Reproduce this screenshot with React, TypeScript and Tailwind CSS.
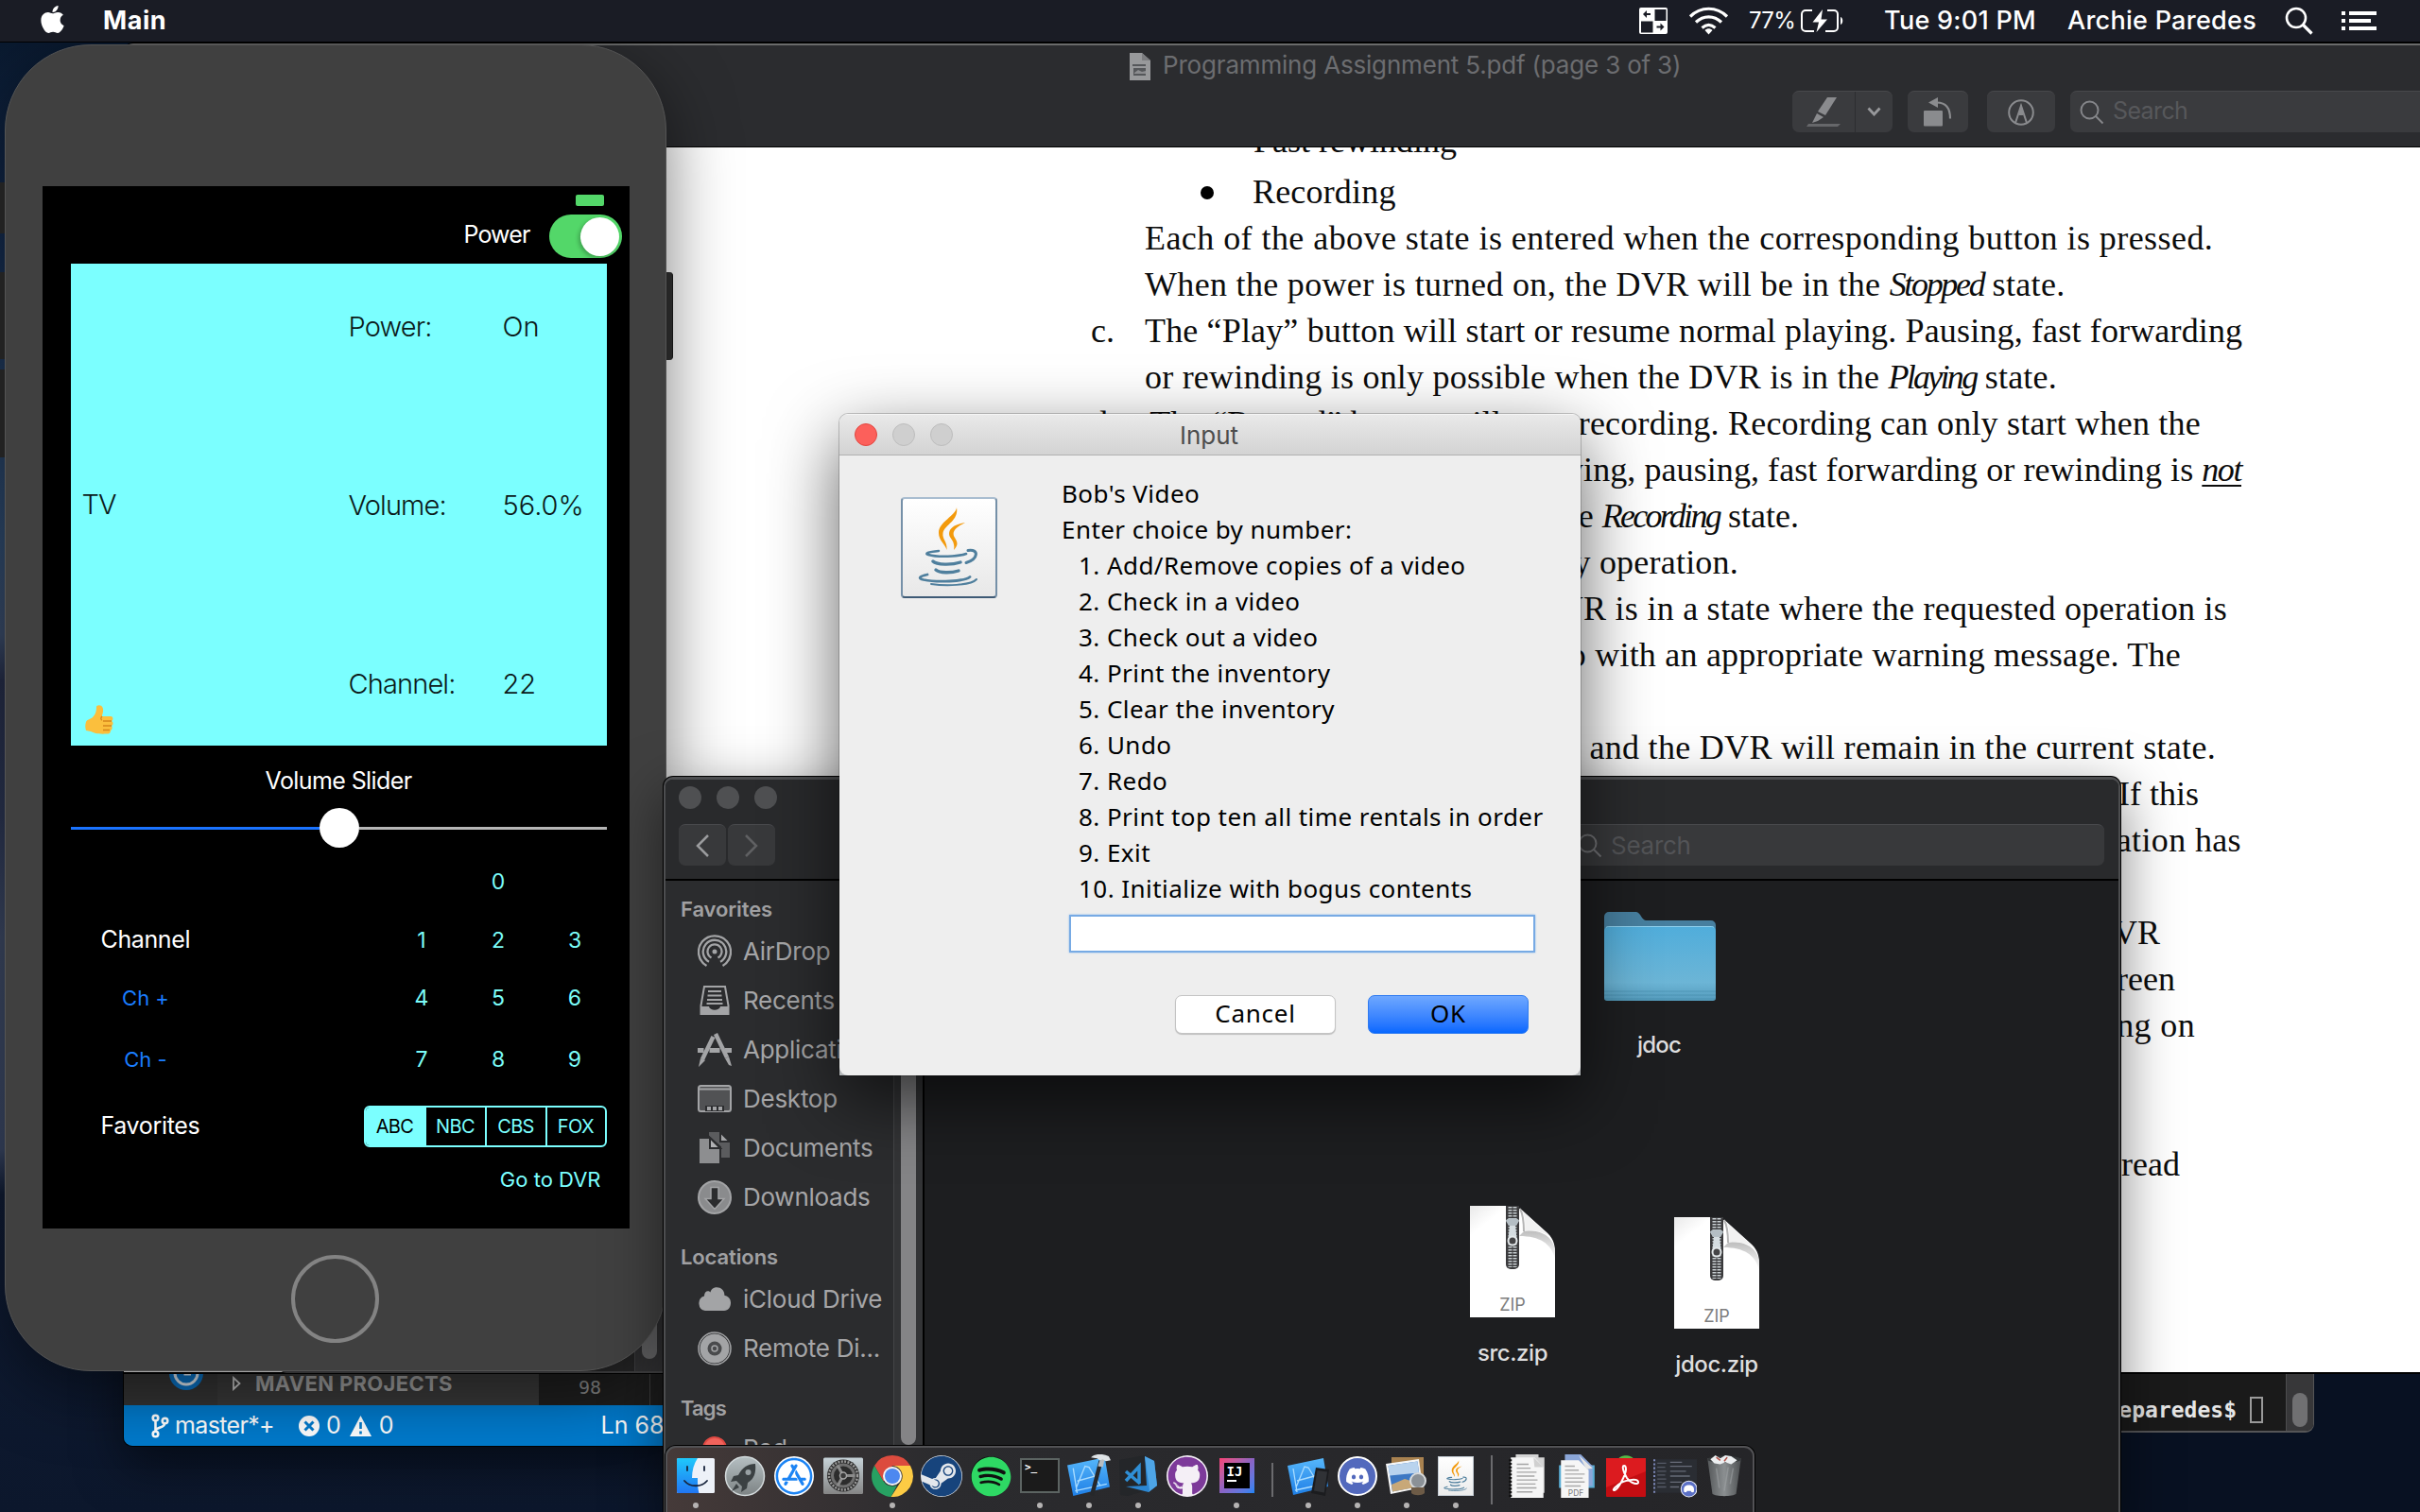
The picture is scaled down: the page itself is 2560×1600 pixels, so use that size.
import React from "react";
import { FaApple, FaSpotify, FaGithub, FaDiscord, FaSteam, FaAppStore } from "react-icons/fa";

/* ---------- menu bar ---------- */

function MenuBar() {
  return (
    <header className="absolute inset-x-0 top-0 z-50 flex h-[45px] items-center border-b border-black bg-[#1a1c25] font-['Inter',sans-serif] text-white">
      <FaApple className="ml-[39px] -mt-[4px] size-[33px]" />
      <span className="ml-[37px] -mt-[1px] text-[27px] leading-[40px] font-bold tracking-[0.02em]">Main</span>
      <svg className="ml-auto h-[28px] w-[30px]" viewBox="0 0 30 28">
        <rect width="30" height="28" rx="2" fill="#fff" />
        <rect x="16.5" y="2" width="12" height="12" fill="#1a1c25" />
        <rect x="2" y="14.5" width="12.5" height="12" fill="#1a1c25" />
        <path d="M4 7l4-4v3h4v2H8v3zM26.500 20.500l-4-4v3h-4v2h4v3z" fill="#1a1c25" />
      </svg>
      <svg className="ml-[22px] h-[30px] w-[43px]" viewBox="0 0 43 30" fill="none" stroke="#fff" strokeWidth="3.2">
        <path d="M2 10.500C13 -.5 30 -.5 41 10.500M8 16.500c8-7.500 19-7.500 27 0M14.500 22.500c4.500-4 9.500-4 14 0" />
        <path d="M21.500 29.500l-4-4.500c2.500-2.200 5.500-2.200 8 0z" fill="#fff" stroke="none" />
      </svg>
      <span className="ml-[21px] w-[48px] whitespace-nowrap text-[24px] leading-[40px] tracking-[-0.03em]">77%</span>
      <svg className="ml-[7px] h-[26px] w-[46px]" viewBox="0 0 46 26" fill="none" stroke="#fff" strokeWidth="2">
        <path d="M12 2H5a4 4 0 0 0-4 4v14a4 4 0 0 0 4 4h9M28 2h7a4 4 0 0 1 4 4v14a4 4 0 0 1-4 4h-9" />
        <path d="M23 1L12.500 14.500h6.500L16.500 25 28 11.500h-6.500z" fill="#fff" stroke="none" />
        <path d="M42 9c3 1 3 7 0 8z" fill="#fff" stroke="none" />
      </svg>
      <span className="ml-[42px] w-[160px] whitespace-nowrap text-[27px] leading-[40px] font-medium tracking-[0.01em]">Tue 9:01 PM</span>
      <span className="ml-[34px] w-[200px] whitespace-nowrap text-[27px] leading-[40px] font-medium tracking-[0.01em]">Archie Paredes</span>
      <svg className="ml-[30px] h-[30px] w-[30px]" viewBox="0 0 30 30" fill="none" stroke="#fff" strokeWidth="2.600">
        <circle cx="12" cy="12" r="10" />
        <path d="M19 19l9.500 9.500" strokeWidth="3.200" />
      </svg>
      <svg className="mr-[46px] ml-[30px] h-[22px] w-[37px]" viewBox="0 0 37 22" fill="#fff">
        <path d="M0 1h4v4H0zM0 9h4v4H0zM0 17h4v4H0zM8 1h29v4H8zM8 9h23v4H8zM8 17h29v4H8z" />
      </svg>
    </header>
  );
}

/* ---------- PDF document window ---------- */

type Line = { mark?: string; text: React.ReactNode; cls: string };

const lines: Line[] = [
  { text: "Each of the above state is entered when the corresponding button is pressed.", cls: "tracking-[0.0123em]" },
  { text: <>When the power is turned on, the DVR will be in the <i className="tracking-[-0.065em]">Stopped</i> state.</>, cls: "tracking-[0.009em]" },
  { mark: "c.", text: "The “Play” button will start or resume normal playing. Pausing, fast forwarding", cls: "tracking-[0.0044em]" },
  { text: <>or rewinding is only possible when the DVR is in the <i className="tracking-[-0.075em]">Playing</i> state.</>, cls: "tracking-[0.006em]" },
  { mark: "d.", text: "The “Record” button will start recording. Recording can only start when the", cls: "w-[1117px] text-right tracking-[0.006em]" },
  { text: <>playing, pausing, fast forwarding or rewinding is <i className="underline decoration-2 underline-offset-4 tracking-[-0.04em]">not</i></>, cls: "w-[1160px] text-right tracking-[0.002em]" },
  { text: <>the <i className="tracking-[-0.075em]">Recording</i> state.</>, cls: "w-[692px] text-right" },
  { text: "any operation.", cls: "w-[628px] text-right tracking-[0.006em]" },
  { text: "DVR is in a state where the requested operation is", cls: "w-[1145px] text-right tracking-[0.007em]" },
  { text: "up with an appropriate warning message. The", cls: "w-[1096px] text-right tracking-[0.006em]" },
  { text: "", cls: "" },
  { text: ", and the DVR will remain in the current state.", cls: "w-[1133px] text-right tracking-[0.0085em]" },
  { text: "If this", cls: "w-[1115px] text-right" },
  { text: "operation has", cls: "w-[1160px] text-right tracking-[0.01em]" },
  { text: "", cls: "" },
  { text: "DVR", cls: "w-[1074px] text-right" },
  { text: "screen", cls: "w-[1090px] text-right" },
  { text: "being on", cls: "w-[1111px] text-right tracking-[0.01em]" },
  { text: "", cls: "" },
  { text: "", cls: "" },
  { text: "read", cls: "w-[1095px] text-right" },
];

function PdfWindow() {
  return (
    <section className="absolute top-[46px] right-0 left-[131px] flex h-[1407px] flex-col overflow-hidden rounded-tl-[10px] border-b border-black bg-[#2b2c2f] shadow-[0_0_0_1px_#000]">
      <div className="h-[110px] border-t-2 border-b border-t-[#6a6b6b] border-b-black font-['Inter',sans-serif]">
        <div className="flex h-[44px] items-center pl-[1064px]">
          <svg className="h-[29px] w-[22px]" viewBox="0 0 22 29">
            <path d="M0 0h13l9 8v21H0z" fill="#98999b" />
            <path d="M13 0v8h9z" fill="#7c7d80" />
            <path d="M3 12h14v2H3zM4 16h13v8H4z" fill="#55575a" />
            <path d="M5 21l4-3 4 2 4-1v3H5z" fill="#8b8c8f" />
          </svg>
          <span className="ml-[13px] -mt-[2px] text-[26px] leading-[44px] tracking-[-0.007em] whitespace-nowrap text-[#6c6d70]">
            Programming Assignment 5.pdf (page 3 of 3)
          </span>
        </div>
        <div className="mt-[4px] flex h-[44px] pl-[1765px]">
          <div className="flex h-full w-[106px] rounded-[7px] border-t border-[#48494c] bg-[#3a3b3e]">
            <div className="flex w-[67px] items-center justify-center border-r border-[#2d2e31]">
              <svg className="h-[32px] w-[36px]" viewBox="0 0 36 32">
                <path d="M22 0h10L20 19l-8-4z" fill="#8a8b8e" />
                <path d="M11 17l7 4-6 4-6 2z" fill="#8a8b8e" />
                <path d="M2 28h34l-3 3H0z" fill="#66676a" />
              </svg>
            </div>
            <div className="flex flex-1 items-center justify-center pb-[2px]">
              <svg className="h-[10px] w-[15px]" viewBox="0 0 15 10" fill="none" stroke="#97989b" strokeWidth="2.800">
                <path d="M1.500 1.500l6 6.500 6-6.500" />
              </svg>
            </div>
          </div>
          <div className="ml-[16px] flex h-full w-[64px] items-center justify-center rounded-[7px] border-t border-[#48494c] bg-[#3a3b3e]">
            <svg className="h-[31px] w-[30px]" viewBox="0 0 30 31">
              <rect x="0" y="14" width="20" height="16.500" rx="1" fill="#8a8b8e" />
              <path d="M5 5.500L15 0v11z" fill="#8a8b8e" />
              <path d="M14 5.500c9 0 14 5 14 17" fill="none" stroke="#8a8b8e" strokeWidth="2.200" />
            </svg>
          </div>
          <div className="ml-[20px] flex h-full w-[72px] items-center justify-center rounded-[7px] border-t border-[#48494c] bg-[#3a3b3e]">
            <svg className="size-[28px]" viewBox="0 0 28 28" fill="none" stroke="#8a8b8e" strokeWidth="2">
              <circle cx="14" cy="14" r="12.800" />
              <path d="M8 25l6-18 6 18" />
              <path d="M12 12l2-7 2 7v5h-4z" fill="#8a8b8e" stroke="none" />
            </svg>
          </div>
          <div className="ml-[16px] flex h-full flex-1 items-center rounded-l-[7px] border-t border-[#48494c] bg-[#3a3b3e]">
            <svg className="ml-[10px] size-[26px]" viewBox="0 0 26 26" fill="none" stroke="#85868a" strokeWidth="2">
              <circle cx="10.500" cy="10.500" r="9" />
              <path d="M17 17l7.500 7.500" />
            </svg>
            <span className="-mt-[3px] ml-[9px] text-[25px] leading-[40px] tracking-[-0.025em] text-[#57585b]">Search</span>
          </div>
        </div>
      </div>
      <article className="flex-1 overflow-hidden bg-white font-['Liberation_Serif',serif] text-[36px] leading-[49px] whitespace-nowrap text-[#0c0c0c]">
        <div className="-mt-[31px] ml-[1195px] h-[54px]">Fast rewinding</div>
        <div className="ml-[1139px] flex h-[49px] items-center">
          <span className="size-[14px] rounded-full bg-black" />
          <span className="ml-[41px] tracking-[0.005em]">Recording</span>
        </div>
        {lines.map((l, i) => (
          <div key={i} className="ml-[1023px] grid h-[49px] grid-cols-[57px_1fr]">
            <span>{l.mark}</span>
            <div>
              <div className={l.cls}>{l.text}</div>
            </div>
          </div>
        ))}
      </article>
    </section>
  );
}

/* ---------- editor, terminal and a console window peeking out ---------- */

function EditorWindow() {
  return (
    <section className="absolute top-[1380px] left-[131px] flex h-[150px] w-[640px] flex-col overflow-hidden rounded-b-[9px] bg-[#1e1e1e] font-['Inter',sans-serif] shadow-[0_0_0_1px_#000,0_20px_50px_rgba(0,0,0,0.5)]">
      <div className="flex flex-1 items-end">
        <div className="flex h-full w-[99px] items-end justify-center bg-[#333333]">
          <svg className="mb-[15px] ml-[32px] size-[38px]" viewBox="0 0 38 38">
            <circle cx="19" cy="19" r="18" fill="#0a72c4" />
            <circle cx="19" cy="19" r="12" fill="none" stroke="#dfe8f0" strokeWidth="3" />
            <path d="M18 12v8h6" fill="none" stroke="#dfe8f0" strokeWidth="3" />
          </svg>
        </div>
        <div className="flex h-full w-[340px] items-end bg-[#383838] pb-[5px]">
          <svg className="mb-[10px] ml-[16px] h-[16px] w-[9px]" viewBox="0 0 9 16" fill="none" stroke="#c5c5c5" strokeWidth="1.800">
            <path d="M1 2l6.500 6L1 14z" />
          </svg>
          <span className="mb-[1px] ml-[15px] text-[22px] leading-[34px] font-bold tracking-[0.015em] whitespace-nowrap text-[#9b9b9b]">MAVEN PROJECTS</span>
        </div>
        <div className="flex h-full flex-1 items-end pl-[42px]">
          <span className="mb-[2px] font-['DejaVu_Sans_Mono',monospace] text-[20px] leading-[34px] text-[#858585]">98</span>
          <span className="ml-[51px] h-full w-px bg-[#404040]" />
        </div>
      </div>
      <div className="flex h-[43px] items-center bg-[#007acc] text-[25px] leading-[38px] text-white">
        <svg className="ml-[29px] h-[26px] w-[19px]" viewBox="0 0 19 26" fill="none" stroke="#fff" strokeWidth="2.600">
          <circle cx="4.500" cy="4.500" r="2.800" />
          <circle cx="4.500" cy="21.500" r="2.800" />
          <circle cx="14.500" cy="7.500" r="2.800" />
          <path d="M4.500 7.500v11M14 10.500c0 5-9 3-9.500 8" />
        </svg>
        <span className="mb-[2px] ml-[6px] w-[106px] tracking-[-0.026em]">master*+</span>
        <svg className="ml-[25px] size-[22px]" viewBox="0 0 22 22">
          <circle cx="11" cy="11" r="11" fill="#fff" />
          <path d="M6.500 6.500l9 9M15.500 6.500l-9 9" stroke="#007acc" strokeWidth="3" />
        </svg>
        <span className="mb-[2px] ml-[7px]">0</span>
        <svg className="ml-[9px] h-[22px] w-[23px]" viewBox="0 0 23 22">
          <path d="M11.500 0L23 22H0z" fill="#fff" />
          <path d="M11.500 7v7M11.500 16.500v3" stroke="#007acc" strokeWidth="2.600" />
        </svg>
        <span className="mb-[2px] ml-[8px]">0</span>
        <span className="mb-[2px] ml-[219px] whitespace-nowrap">Ln 68</span>
      </div>
    </section>
  );
}

function ConsoleWindow() {
  return (
    <section className="absolute top-[1300px] left-[294px] flex h-[153px] w-[407px] justify-end rounded-bl-[9px] border-b-2 border-[#4c4c4e] bg-[#2b2b2c]">
      <div className="flex w-[30px] items-end justify-center border-l border-[#4c4c4e] bg-[#39393b]">
        <div className="mb-[13px] h-[90px] w-[16px] rounded-full bg-[#7a7a7c]" />
      </div>
    </section>
  );
}

function TerminalWindow() {
  return (
    <section className="absolute top-[1400px] left-[1700px] flex h-[116px] w-[748px] overflow-hidden rounded-br-[9px] border-r border-b-2 border-[#555557] bg-[#1a1a1a]">
      <div className="flex flex-1 items-end justify-end">
        <span className="mb-[7px] font-['DejaVu_Sans_Mono',monospace] text-[23px] leading-[30px] font-bold text-[#e6e6e6]">archieparedes$</span>
        <span className="mr-[24px] mb-[8px] ml-[14px] h-[28px] w-[14px] border-2 border-[#9a9a9a]" />
      </div>
      <div className="flex w-[29px] items-end justify-center border-l border-[#4c4c4e] bg-[#373739]">
        <div className="mb-[4px] h-[36px] w-[16px] rounded-full bg-[#707072]" />
      </div>
    </section>
  );
}

/* ---------- Finder ---------- */

function FinderIcon({ name }: { name: string }) {
  const c = "#a3a4a6";
  return (
    <svg className="size-[36px] shrink-0" viewBox="0 0 36 36" fill="none" stroke={c} strokeWidth="2">
      {name === "AirDrop" && (
        <g>
          <circle cx="18" cy="18" r="2.500" fill={c} stroke="none" />
          <path d="M9.500 33a17 17 0 1 1 17 0M12 28.800a12.300 12.300 0 1 1 12 0M14.500 24.500a7.500 7.500 0 1 1 7 0" strokeWidth="2.300" />
        </g>
      )}
      {name === "Recents" && (
        <g>
          <path d="M7 3h22l3.500 20v9h-29v-9z" />
          <path d="M3 24h9c1 5 11 5 12 0h9v9H3z" fill={c} stroke="none" />
          <path d="M11 8h14M10.500 12.500h15M10 17h16M9.500 21h17" />
        </g>
      )}
      {name === "Applications" && (
        <g strokeWidth="4.500">
          <path d="M19 1L31 26M16.500 4L5 28" />
          <path d="M0 18.500h6.500M12.500 18.500h11M29 18.500h7" strokeWidth="5" />
          <path d="M3 27l5 2-7 7zM29 27l4-2 3 10-3-1z" fill={c} stroke="none" />
        </g>
      )}
      {name === "Desktop" && (
        <g>
          <rect x="1" y="4" width="34" height="27" rx="2.500" fill="#515254" />
          <path d="M1 7.500h34" />
          <path d="M8 25h20v6H8z" fill="#2b2c2e" stroke="none" />
          <path d="M10 26h4v4h-4zM16 26h4v4h-4zM22 26h4v4h-4z" fill={c} stroke="none" />
        </g>
      )}
      {name === "Documents" && (
        <g stroke="none">
          <path d="M12 1h12l10 10v17H12z" fill="#5b5c5e" />
          <path d="M24 1v10h10z" fill={c} stroke="#2b2c2e" />
          <path d="M1 7h12l11 10v18H1z" fill="#8d8e90" stroke="#2b2c2e" />
          <path d="M13 7v11h11z" fill="#b0b1b3" stroke="#2b2c2e" />
        </g>
      )}
      {name === "Downloads" && (
        <g>
          <circle cx="18" cy="18" r="17" fill="#8a8b8d" />
          <path d="M14 7.500h8v12h6l-10 11-10-11h6z" fill="#2b2c2e" strokeWidth="1.500" />
        </g>
      )}
      {name === "iCloud Drive" && (
        <path d="M8 30a8 8 0 0 1-1-15.500C7 9 11.500 8 13.500 10.500 15 3 28 3 28.500 14 38 15 36.500 30 28 30z" fill={c} stroke="none" />
      )}
      {name === "Remote Di..." && (
        <g>
          <circle cx="18" cy="18" r="17" strokeWidth="1.500" />
          <circle cx="18" cy="18" r="11" strokeWidth="9" />
          <circle cx="18" cy="18" r="7.500" fill="#4a4b4d" stroke="none" />
          <circle cx="18" cy="18" r="3" strokeWidth="1.500" />
        </g>
      )}
      {name === "Red" && <circle cx="18" cy="18" r="12" fill="#f1635c" stroke="#e04a43" />}
    </svg>
  );
}

function SideRow({ name }: { name: string }) {
  return (
    <div className="flex h-[52px] items-center pl-[34px]">
      <FinderIcon name={name} />
      <span className="ml-[12px] text-[26px] leading-[50px] tracking-[-0.01em] whitespace-nowrap text-[#a6a6a8]">{name}</span>
    </div>
  );
}

function ZipFile({ name, id }: { name: string; id: string }) {
  return (
    <div className="flex w-[120px] flex-col items-center">
      <svg className="h-[118px] w-[90px]" viewBox="0 0 90 118">
        <defs>
          <linearGradient id={id} x1="0" y1="0" x2="0.300" y2="0.500">
            <stop offset="0" stopColor="#e9e9e9" />
            <stop offset="0.400" stopColor="#fff" />
          </linearGradient>
          <linearGradient id={id + "c"} x1="0" y1="0" x2="0" y2="1">
            <stop offset="0" stopColor="#bdbdbd" />
            <stop offset="1" stopColor="#fdfdfd" />
          </linearGradient>
        </defs>
        <path d="M0 0h38c12 0 16 3 22 9l20 18c7 6 10 12 10 22v69H0z" fill={`url(#${id})`} />
        <path d="M58 26c14 0 28 3 32 20v10C86 40 74 32 52 32z" fill={`url(#${id}c)`} />
        <path d="M53 3c5 6 6 12 5 24 10-2 18 0 26 5z" fill="#f1f1f1" />
        <path d="M53 3c3 6 4 12 4 24" fill="none" stroke="#b5b5b5" strokeWidth="2" />
        <path d="M38 0h14v62a5 5 0 0 1-5 5h-4a5 5 0 0 1-5-5z" fill="#3a3a3c" />
        <path d="M42.500 1v64M47.500 1v64" stroke="#c9d0d3" strokeWidth="4" strokeDasharray="1.600 1.400" />
        <path d="M38 16c0-4 14-4 14 0l-3 5h-8z" fill="#b4bec4" />
        <path d="M42 21h6l2 18h-10z" fill="#d5dde1" />
        <circle cx="45" cy="37" r="4.500" fill="#454547" stroke="#e3e8ea" strokeWidth="2" />
        <text x="45" y="111" textAnchor="middle" fontFamily="Inter" fontSize="18" fill="#7d7d7d">ZIP</text>
      </svg>
      <span className="mt-[22px] text-[24px] leading-[32px] font-medium tracking-[-0.018em] text-[#dededf]">{name}</span>
    </div>
  );
}

function Finder() {
  return (
    <section className="absolute top-[822px] left-[702px] flex h-[800px] w-[1541px] flex-col overflow-hidden rounded-t-[10px] border-2 border-t-[3px] border-[#4d4e50] bg-[#1d1e20] font-['Inter',sans-serif] shadow-[0_0_0_1px_#000,0_18px_60px_rgba(0,0,0,0.5)]">
      <div className="h-[107px] border-b-2 border-black bg-[#292a2c]">
        <div className="flex gap-[16px] pt-[7px] pl-[14px]">
          <span className="size-[24px] rounded-full bg-[#4f5052]" />
          <span className="size-[24px] rounded-full bg-[#4f5052]" />
          <span className="size-[24px] rounded-full bg-[#4f5052]" />
        </div>
        <div className="mt-[16px] flex h-[44px] gap-[2px] pl-[14px]">
          <div className="flex w-[50px] items-center justify-center rounded-[7px] border-t border-[#48494c] bg-[#38393b]">
            <svg className="h-[24px] w-[14px]" viewBox="0 0 14 24" fill="none" stroke="#9a9b9d" strokeWidth="2.500"><path d="M13 1L2 12l11 11" /></svg>
          </div>
          <div className="flex w-[50px] items-center justify-center rounded-[7px] border-t border-[#48494c] bg-[#38393b]">
            <svg className="h-[24px] w-[14px]" viewBox="0 0 14 24" fill="none" stroke="#5f6062" strokeWidth="2.500"><path d="M1 1l11 11L1 23" /></svg>
          </div>
          <div className="mr-[15px] ml-auto flex w-[565px] items-center rounded-[7px] border-t border-[#48494c] bg-[#38393b]">
            <svg className="ml-[8px] size-[26px]" viewBox="0 0 26 26" fill="none" stroke="#707174" strokeWidth="2">
              <circle cx="10.500" cy="10.500" r="9" />
              <path d="M17 17l7.500 7.500" />
            </svg>
            <span className="ml-[9px] text-[26px] leading-[40px] tracking-[-0.01em] text-[#535457]">Search</span>
          </div>
        </div>
      </div>
      <div className="flex flex-1">
        <aside className="w-[242px] border-r border-[#444547] bg-[#2b2c2e]">
          <h3 className="mt-[13px] pl-[16px] text-[22px] leading-[34px] font-semibold tracking-[-0.005em] text-[#a0a0a2]">Favorites</h3>
          <div className="pt-[2px]">
            <SideRow name="AirDrop" />
            <SideRow name="Recents" />
            <SideRow name="Applications" />
            <SideRow name="Desktop" />
            <SideRow name="Documents" />
            <SideRow name="Downloads" />
          </div>
          <h3 className="mt-[20px] pl-[16px] text-[22px] leading-[34px] font-semibold tracking-[-0.005em] text-[#a0a0a2]">Locations</h3>
          <div className="pt-[2px]">
            <SideRow name="iCloud Drive" />
            <SideRow name="Remote Di..." />
          </div>
          <h3 className="mt-[20px] pl-[16px] text-[22px] leading-[34px] font-semibold tracking-[-0.04em] text-[#a0a0a2]">Tags</h3>
          <SideRow name="Red" />
        </aside>
        <div className="flex w-[32px] justify-center border-r-2 border-black bg-[#333436]">
          <div className="h-[597px] w-[16px] rounded-b-full bg-[#848486]" />
        </div>
        <div className="flex-1">
          <div className="mt-[33px] ml-[718px] flex w-[120px] flex-col items-center">
            <svg className="h-[94px] w-[118px]" viewBox="0 0 118 94">
              <defs>
                <linearGradient id="folder" x1="0" y1="0" x2="0" y2="1">
                  <stop offset="0" stopColor="#50addb" />
                  <stop offset="0.750" stopColor="#6cb5d6" />
                  <stop offset="1" stopColor="#559cbd" />
                </linearGradient>
              </defs>
              <path d="M0 24V5a5 5 0 0 1 5-5h29c4 0 6 9 10 9h69a5 5 0 0 1 5 5v10z" fill="#477f9f" />
              <path d="M0 20a5 5 0 0 1 5-5h108a5 5 0 0 1 5 5v71a3 3 0 0 1-3 3H3a3 3 0 0 1-3-3z" fill="url(#folder)" />
              <path d="M2 16.500c1-1 2-1 3-1h108c1 0 2 0 3 1" stroke="#8fd0ee" fill="none" />
              <path d="M0 84h118M0 88h118M0 92h118" stroke="#4388a8" strokeOpacity="0.600" />
            </svg>
            <span className="mt-[31px] -ml-[2px] text-[24px] leading-[32px] font-medium tracking-[-0.033em] text-[#dededf]">jdoc</span>
          </div>
          <div className="mt-[154px] ml-[562px] flex gap-[96px]">
            <ZipFile name="src.zip" id="zipa" />
            <div className="mt-[12px]">
              <ZipFile name="jdoc.zip" id="zipb" />
            </div>
          </div>
        </div>
      </div>
    </section>
  );
}

/* ---------- simulated phone ---------- */

function Key({ children }: { children?: React.ReactNode }) {
  return <span className="w-[81px] text-center text-[23px] leading-[40px] text-[#7bfcf8]">{children}</span>;
}

function Stat({ label, value }: { label: string; value: string }) {
  return (
    <div className="grid grid-cols-[163px_1fr]">
      <span>{label}</span>
      <span className="tracking-normal">{value}</span>
    </div>
  );
}

function Phone() {
  return (
    <>
      <div className="absolute top-[193px] left-[-6px] h-[54px] w-[14px] rounded-r-[3px] bg-[#2d2d2d]" />
      <div className="absolute top-[288px] left-[-6px] h-[92px] w-[14px] rounded-r-[3px] bg-[#2d2d2d]" />
      <div className="absolute top-[391px] left-[-6px] h-[93px] w-[14px] rounded-r-[3px] bg-[#2d2d2d]" />
      <div className="absolute top-[288px] left-[698px] h-[93px] w-[14px] rounded-r-[4px] border-r border-[#1a1a1a] bg-[#323232]" />
      <section className="absolute top-[47px] left-[5px] flex h-[1404px] w-[700px] flex-col items-center rounded-[91px] border border-[#545454] bg-[#404040] font-['Inter',sans-serif] shadow-[0_20px_70px_rgba(0,0,0,0.5)]">
        <div className="mt-[149px] h-[1103px] w-[621px] bg-black text-white">
          <div className="flex justify-end pt-[9px] pr-[27px]">
            <span className="h-[12px] w-[30px] rounded-[2px] bg-[#53d769]" />
          </div>
          <div className="flex h-[61px] items-start justify-end pr-[8px]">
            <span className="mt-[9px] w-[90px] text-[25px] leading-[42px] tracking-[-0.035em]">Power</span>
            <span className="mt-[9px] flex h-[46px] w-[77px] justify-end rounded-full bg-[#53d769] p-[3px]">
              <span className="size-[41px] rounded-full bg-white shadow-[-2px_2px_4px_rgba(0,0,0,0.25)]" />
            </span>
          </div>
          <div className="relative ml-[30px] flex h-[510px] w-[567px] flex-col justify-between bg-[#7bffff] pt-[48px] pb-[46px] pl-[294px] text-[29px] leading-[38px] font-light tracking-[-0.03em] whitespace-nowrap text-[#0b1a1a]">
            <Stat label="Power:" value="On" />
            <Stat label="Volume:" value="56.0%" />
            <Stat label="Channel:" value="22" />
            <span className="absolute top-[236px] left-[12px]">TV</span>
            <svg className="absolute top-[467px] left-[15px] h-[31px] w-[30px]" viewBox="0 0 30 31">
              <path d="M1 18C2 15 6 15 8 13 11 10 12 7 12 2 12 0 18-1 19 4c.5 4-1 6-1 8h9c3 0 3 4 1 5 2 1 2 4 0 5 1 1 1 4-1 5 0 3-2 3.500-4 3.500C14 31 10 30 6 28l-5-1C0 24 0 21 1 18z" fill="#fbbf3d" />
              <path d="M18 12c-2 2-1 4 0 4M19 17h9M19 22h9M19 26.500h7" stroke="#d6861c" strokeWidth="1.300" fill="none" />
            </svg>
          </div>
          <div className="mt-[21px] ml-[30px] w-[567px] text-center text-[25px] leading-[32px] tracking-[-0.024em]">Volume Slider</div>
          <div className="mt-[13px] ml-[30px] flex h-[42px] w-[567px] items-center">
            <span className="h-[3px] w-[263px] bg-[#1a73ff]" />
            <span className="size-[42px] rounded-full bg-white" />
            <span className="h-[3px] flex-1 bg-[#b6b6b6]" />
          </div>
          <div className="mt-[16px] flex h-[62px] pl-[361px]">
            <Key />
            <Key>0</Key>
          </div>
          <div className="flex h-[61px] pl-[62px]">
            <span className="w-[299px] text-[25px] leading-[38px] tracking-[-0.015em]">Channel</span>
            <Key>1</Key>
            <Key>2</Key>
            <Key>3</Key>
          </div>
          <div className="flex h-[65px] pl-[63px]">
            <span className="mr-[205px] w-[93px] text-center text-[22px] leading-[40px] text-[#1a7dff]">Ch +</span>
            <Key>4</Key>
            <Key>5</Key>
            <Key>6</Key>
          </div>
          <div className="flex h-[69px] pl-[63px]">
            <span className="mr-[205px] w-[93px] text-center text-[22px] leading-[40px] text-[#1a7dff]">Ch -</span>
            <Key>7</Key>
            <Key>8</Key>
            <Key>9</Key>
          </div>
          <div className="flex h-[44px] pl-[62px]">
            <span className="w-[278px] text-[25px] leading-[43px] tracking-[-0.014em]">Favorites</span>
            <div className="grid h-[44px] w-[257px] grid-cols-[64px_64px_64px_61px] overflow-hidden rounded-[6px] border-2 border-[#7bffff] text-center text-[20px] leading-[40px] tracking-[-0.03em] text-[#7bffff]">
              <span className="bg-[#7bffff] pr-[2px] text-black">ABC</span>
              <span className="border-r-2 border-[#7bffff]">NBC</span>
              <span className="border-r-2 border-[#7bffff]">CBS</span>
              <span>FOX</span>
            </div>
          </div>
          <div className="mt-[14px] pr-[30px] text-right text-[22px] leading-[40px] text-[#7bffff]">Go to DVR</div>
        </div>
        <div className="mt-[28px] mr-[2px] size-[93px] rounded-full border-[4px] border-[#838383]" />
      </section>
    </>
  );
}

/* ---------- Java input dialog ---------- */

function JavaCup({ className }: { className: string }) {
  return (
    <svg className={className} viewBox="0 0 102 107" fill="none" strokeLinecap="round">
      <path d="M59 11c-1 9-19 15-19 27 0 8 7 12 8.500 18 1-9-5-11-4-18 2-9 17-13 14.500-27z" fill="#f39a0c" />
      <path d="M68 27c-11 2-17 6-17 12 0 5 7 7 5 17 5-6 4-8 1-13-4-6 1-11 11-16z" fill="#f39a0c" />
      <g stroke="#4f7f9d">
        <path d="M40 57c-12 1-15 3-11 4 10 3 32 2 40-1" strokeWidth="2.600" />
        <path d="M71 56.500c12-2 11 9-2 13" strokeWidth="3" />
        <path d="M34 68c4 4 20 4 29 1" strokeWidth="3.400" />
        <path d="M37 77c4 3.500 16 3.500 24 1" strokeWidth="3.400" />
        <path d="M28 82c-9 2-10 4-4 5.500 14 3 43 2 49-3" strokeWidth="2.800" />
        <path d="M32 92c14 2 42 2 48-5" strokeWidth="2" />
      </g>
    </svg>
  );
}

const choices = [
  "1. Add/Remove copies of a video",
  "2. Check in a video",
  "3. Check out a video",
  "4. Print the inventory",
  "5. Clear the inventory",
  "6. Undo",
  "7. Redo",
  "8. Print top ten all time rentals in order",
  "9. Exit",
  "10. Initialize with bogus contents",
];

function InputDialog() {
  return (
    <section className="absolute top-[438px] left-[888px] h-[700px] w-[784px] rounded-t-[9px] bg-[#b4b7b9] shadow-[0_0_0_1px_rgba(0,0,0,0.2),0_26px_75px_rgba(0,0,0,0.62)]">
      <div className="flex h-full flex-col overflow-hidden rounded-[9px] bg-[#eeeeee]">
        <div className="grid h-[44px] grid-cols-[1fr_auto_1fr] items-center border-t border-b border-t-[#f6f6f6] border-b-[#b1b1b1] bg-linear-to-b from-[#e9e9e9] to-[#d3d3d3] pl-[16px]">
          <div className="flex gap-[16px]">
            <span className="size-[24px] rounded-full border border-[#e2463f] bg-[#fc605b]" />
            <span className="size-[24px] rounded-full border border-[#bdbdbd] bg-[#cfcfcf]" />
            <span className="size-[24px] rounded-full border border-[#bdbdbd] bg-[#cfcfcf]" />
          </div>
          <span className="mt-[2px] pr-[18px] font-['Inter',sans-serif] text-[26px] leading-[38px] text-[#4d4d4d]">Input</span>
        </div>
        <div className="flex">
          <div className="mt-[44px] ml-[65px] h-[107px] w-[102px] rounded-[4px] border-2 border-t-[#a9bdd0] border-r-[#7590a8] border-b-[#3e5a75] border-l-[#7590a8] bg-linear-to-b from-white to-[#e8e8e8]">
            <JavaCup className="-mt-[2px] -ml-[2px] h-[107px] w-[102px]" />
          </div>
          <div className="mt-[21px] ml-[68px] font-['Noto_Sans',sans-serif] text-[26px] leading-[38px] tracking-[0.017em] whitespace-nowrap text-black">
            <div>Bob's Video</div>
            <div>Enter choice by number:</div>
            {choices.map((c) => (
              <div key={c} className="pl-[18px]">{c}</div>
            ))}
          </div>
        </div>
        <div className="mt-[9px] ml-[243px] h-[40px] w-[493px] border-2 border-[#77aae4] bg-white shadow-[0_0_2px_#8fbdf0]" />
        <div className="mt-[45px] mr-[55px] flex justify-end gap-[34px] font-['Noto_Sans',sans-serif] text-[26px] tracking-[0.03em] text-black">
          <span className="h-[41px] w-[170px] rounded-[7px] border border-[#c4c4c4] bg-white text-center leading-[36px] shadow-[0_1px_1px_rgba(0,0,0,0.2)]">Cancel</span>
          <span className="h-[41px] w-[170px] rounded-[7px] border border-[#2f7bf0] bg-linear-to-b from-[#6ea7ff] to-[#0467ff] text-center leading-[36px]">OK</span>
        </div>
      </div>
    </section>
  );
}

/* ---------- dock ---------- */

function Slot({ dot, children }: { dot?: boolean; children: React.ReactNode }) {
  return (
    <div className="flex w-[52px] flex-col items-center pt-[8px]">
      <div className="flex size-[44px] items-center justify-center">{children}</div>
      {dot && <span className="mt-[6px] size-[6px] rounded-full bg-[#b5b3b3]" />}
    </div>
  );
}

function Blueprint({ id }: { id: string }) {
  return (
    <>
      <defs>
        <linearGradient id={id} x1="0" y1="0" x2="0" y2="1">
          <stop offset="0" stopColor="#56b7fb" />
          <stop offset="1" stopColor="#1f7fe6" />
        </linearGradient>
      </defs>
      <path d="M0 11L38 3l5 30L6 42z" fill={`url(#${id})`} />
      <path d="M9 34l9-22 4 1 11 18M10 27l22-6M6 14l4 25M8 37l32-7" fill="none" stroke="#a9dcff" strokeWidth="1.300" />
    </>
  );
}

function Dock() {
  return (
    <nav className="absolute top-[1530px] left-[704px] z-40 flex h-[80px] w-[1152px] rounded-t-[11px] border-2 border-[#525255] bg-linear-to-r from-[#453a39] via-[#2b2b2e] via-25% to-[#252528] pl-[4px] shadow-[0_0_0_1px_#000]">
      <Slot dot>
        <svg className="size-[44px]" viewBox="0 0 44 44">
          <defs>
            <linearGradient id="finder" x1="0" y1="0" x2="0" y2="1">
              <stop offset="0" stopColor="#1fc8fb" />
              <stop offset="1" stopColor="#2176f3" />
            </linearGradient>
          </defs>
          <rect x="2" y="3" width="40" height="37" rx="1.500" fill="#edf1f8" />
          <path d="M24 3c-4 6-6 13-6 21h6c0 6 0 11 1.500 16H3.500A1.500 1.500 0 0 1 2 38.500v-34A1.500 1.500 0 0 1 3.500 3z" fill="url(#finder)" />
          <path d="M13 12v4M31 12v4M10 27c6 7 18 7 24 0" stroke="#17233b" strokeWidth="1.800" fill="none" strokeLinecap="round" />
        </svg>
      </Slot>
      <Slot>
        <svg className="size-[44px]" viewBox="0 0 44 44">
          <defs>
            <linearGradient id="launch" x1="0" y1="0" x2="0" y2="1">
              <stop offset="0" stopColor="#b5bfc2" />
              <stop offset="1" stopColor="#7d8384" />
            </linearGradient>
          </defs>
          <circle cx="22" cy="22" r="20.500" fill="url(#launch)" stroke="#d3dadc" strokeWidth="1.500" />
          <path d="M33 9c-8 0-14 4-18 12l-5 1-3 6 6-1 6 6-1 6 6-4 1-6c7-4 9-11 8-20zM13 30l-5 8 8-4z" fill="#3b4143" />
          <circle cx="25.500" cy="18" r="3" fill="#98a1a4" />
        </svg>
      </Slot>
      <Slot>
        <span className="flex size-[42px] items-center justify-center rounded-full bg-white">
          <FaAppStore className="size-[40px] text-[#1c84f4]" />
        </span>
      </Slot>
      <Slot>
        <svg className="size-[44px]" viewBox="0 0 44 44">
          <defs>
            <linearGradient id="prefs" x1="0" y1="0" x2="0" y2="1">
              <stop offset="0" stopColor="#c6d2d8" />
              <stop offset="1" stopColor="#858585" />
            </linearGradient>
          </defs>
          <rect x="1" y="2.500" width="42" height="38.500" rx="1.500" fill="url(#prefs)" />
          <circle cx="22" cy="21.500" r="17" fill="#2c2c2c" />
          <circle cx="22" cy="21.500" r="15" fill="none" stroke="#9a9a9a" strokeWidth="2.500" strokeDasharray="2 1.400" />
          <circle cx="22" cy="21.500" r="11.500" fill="none" stroke="#6f6f6f" strokeWidth="3" />
          <path d="M22 21.500h12M22 21.500l-6-11M22 21.500l-6 11" stroke="#8b8b8b" strokeWidth="3" />
          <circle cx="22" cy="21.500" r="3.500" fill="#3a3a3a" stroke="#a5a5a5" strokeWidth="1.500" />
        </svg>
      </Slot>
      <Slot dot>
        <svg className="size-[44px]" viewBox="0 0 44 44">
          <path d="M22 0A22 22 0 0 1 41 11H22L12.500 27.500 3 11A22 22 0 0 1 22 0z" fill="#dc4b3e" />
          <path d="M3 11l9.500 16.500A11 11 0 0 0 27 31.500L20.500 44A22 22 0 0 1 3 11z" fill="#27a162" />
          <path d="M41 11a22 22 0 0 1-20.500 33l11-17A11 11 0 0 0 22 11z" fill="#fdcb44" />
          <circle cx="22" cy="22" r="10" fill="#f4f4f4" />
          <circle cx="22" cy="22" r="8" fill="#4d88f0" />
        </svg>
      </Slot>
      <Slot>
        <span className="flex size-[44px] items-center justify-center rounded-full bg-[#e3e7ec]">
          <FaSteam className="size-[44px] shrink-0 text-[#17447c]" />
        </span>
      </Slot>
      <Slot>
        <span className="flex size-[42px] items-center justify-center rounded-full bg-[#101010]">
          <FaSpotify className="size-[43px] shrink-0 text-[#2ed964]" />
        </span>
      </Slot>
      <Slot dot>
        <div className="mb-[2px] h-[37px] w-[42px] border-2 border-[#5c6462] bg-[#1b1b1b] pl-[3px] font-['DejaVu_Sans_Mono',monospace] text-[11px] leading-[16px] font-bold text-white">&gt;_</div>
      </Slot>
      <Slot dot>
        <svg className="size-[46px] shrink-0" viewBox="0 0 44 44">
          <Blueprint id="xcode" />
          <path d="M32 6l4 1-9 35-4-1z" fill="#26282b" />
          <path d="M31 12l3-9 4 1-2 9z" fill="#b9bdc1" />
          <path d="M24 3c4-4 12-4 18-1l2 4-5 1-3-2-3 1-3-2z" fill="#dfe3e6" />
        </svg>
      </Slot>
      <Slot dot>
        <svg className="size-[44px]" viewBox="0 0 44 44">
          <path d="M2 5l27-5 6 36-24 7-8-1z" fill="#242629" />
          <path d="M29 1l10 5 3 26-9 7-24-6 22-1z" fill="#2b86d1" />
          <path d="M29 1l5 36-1 2 9-7-3-26z" fill="#4ea5e6" />
          <path d="M9 17l15 13M9 27l14-15v18" fill="none" stroke="#2f8fd6" strokeWidth="3.500" />
        </svg>
      </Slot>
      <Slot>
        <span className="flex size-[44px] items-center justify-center rounded-full bg-[#f4eff6]">
          <FaGithub className="size-[42px] shrink-0 text-[#7d3a9a]" />
        </span>
      </Slot>
      <Slot dot>
        <div className="mb-[1px] flex size-[37px] items-center justify-center bg-linear-to-br from-[#fb3d75] via-[#8a63c4] to-[#1285f5]">
          <div className="h-[27px] w-[27px] bg-black pl-[3px] font-['DejaVu_Sans_Mono',monospace] text-[14px] leading-[18px] font-bold text-white">
            IJ
            <div className="h-[2px] w-[10px] bg-white" />
          </div>
        </div>
      </Slot>
      <div className="flex w-[24px] justify-center pt-[16px]">
        <span className="h-[36px] w-[2px] bg-[#6b6b6e]" />
      </div>
      <Slot dot>
        <svg className="size-[44px]" viewBox="0 0 44 44">
          <Blueprint id="sim" />
          <path d="M30 13l14 2-4 28-15-3z" fill="#1b1c1f" />
          <path d="M31.500 16l10.500 1.500-3.200 22-10.800-2z" fill="#303236" />
        </svg>
      </Slot>
      <Slot dot>
        <span className="flex size-[42px] items-center justify-center rounded-full border-2 border-white bg-[#5269bd]">
          <FaDiscord className="size-[26px] text-white" />
        </span>
      </Slot>
      <Slot dot>
        <svg className="size-[44px]" viewBox="0 0 44 44">
          <rect x="6" y="2" width="34" height="30" fill="#a98250" />
          <path d="M0 9l35-5 4 30-34 7z" fill="#f7f7f7" />
          <path d="M2.500 11l31-4.500 3.500 26-30 6z" fill="#3d78c4" />
          <path d="M2.500 11l31-4.500 1.500 12-31 3z" fill="#b9d3ee" />
          <path d="M6 31l14-6 16 5 .5 3-29.500 5.500z" fill="#c8a878" />
          <circle cx="34" cy="27" r="8" fill="#8b9197" stroke="#d7dadc" strokeWidth="2" />
          <path d="M27 34h14v6c-3 3-11 3-14 0z" fill="#6d5b47" />
        </svg>
      </Slot>
      <Slot dot>
        <div className="flex h-[42px] w-[38px] items-center justify-center border border-[#c3cbd3] bg-linear-to-b from-white to-[#ececec]">
          <JavaCup className="h-[42px] w-[40px] shrink-0" />
        </div>
      </Slot>
      <div className="flex w-[24px] justify-center pt-[8px]">
        <span className="h-[52px] w-[2px] bg-[#6b6b6e]" />
      </div>
      <Slot>
        <svg className="size-[46px] shrink-0" viewBox="0 0 44 44">
          <path d="M10 0h23v3h6v36H10z" fill="#d4d4d4" />
          <path d="M5 3h24l9 10v31H5z" fill="#f6f6f6" />
          <path d="M11 10h12M11 14h14M11 18h20M11 22h18M11 26h21M11 30h19M11 34h20M11 38h16" stroke="#a5a5a5" strokeWidth="1.300" />
          <path d="M28 3l1 10h9z" fill="#d0d0d0" />
          <path d="M4.500 5v38" stroke="#111" strokeWidth="3" strokeDasharray="2 1.600" />
        </svg>
      </Slot>
      <Slot>
        <svg className="size-[46px] shrink-0" viewBox="0 0 44 44">
          <path d="M4 11h36v23H4z" fill="#5aaed6" />
          <path d="M10 0h16l12 12v20H10z" fill="#8ba6d8" />
          <path d="M6 6h18l10 10v28H6z" fill="#f6f6f6" />
          <path d="M24 1l14 13-6 1z" fill="#e6e6e6" />
          <path d="M10 12h10M10 16h14M10 20h20M10 24h18M10 28h20M10 32h16" stroke="#aaa" strokeWidth="1.300" />
          <text x="21" y="42" fontSize="8" fontFamily="Inter" textAnchor="middle" fill="#777">PDF</text>
        </svg>
      </Slot>
      <Slot>
        <svg className="size-[44px]" viewBox="0 0 44 44">
          <path d="M14 4c2-5 14-5 16 0z" fill="#57b947" />
          <rect x="1" y="3" width="42" height="41" rx="1" fill="#c30d12" />
          <path d="M1 3h42v14L1 34z" fill="#dc1b1f" />
          <path d="M20 11c-3 0 0 8 3 13 4 6 13 8 12 4s-15-2-21 3-6 6-4 6c4-1 12-17 12-22 0-3-1-4-2-4z" fill="none" stroke="#fff" strokeWidth="2" />
        </svg>
      </Slot>
      <Slot>
        <svg className="size-[46px] shrink-0" viewBox="0 0 44 44">
          <rect x="0" y="5" width="44" height="34" fill="#2a2d33" />
          <path d="M1 5v34" stroke="#7b86b5" strokeWidth="2" strokeDasharray="2 2" />
          <path d="M4 9h9M4 13h8M4 17h9M4 21h8M4 25h9M4 29h8M4 33h9" stroke="#555a66" strokeWidth="1.200" />
          <path d="M17 8h12M17 12h22M17 17h16M17 22h20M17 28h12M17 33h9" stroke="#676c78" strokeWidth="1.200" />
          <circle cx="36" cy="35" r="8" fill="#5b70c6" stroke="#e9ecf7" />
          <path d="M31 38c-1-6 2-7 5-7s6 1 5 7c-2 1-3 0-3-1h-4c0 1-1 2-3 1z" fill="#fff" />
        </svg>
      </Slot>
      <Slot>
        <svg className="size-[46px] shrink-0" viewBox="0 0 44 44">
          <defs>
            <linearGradient id="trash" x1="0" y1="0" x2="1" y2="0">
              <stop offset="0" stopColor="#55585a" />
              <stop offset="0.500" stopColor="#8b8f91" />
              <stop offset="1" stopColor="#4d5052" />
            </linearGradient>
          </defs>
          <path d="M5 4c8-1 26-1 34 0l-5 36c-3 3-21 3-24 0z" fill="url(#trash)" />
          <ellipse cx="22" cy="5" rx="17" ry="3.500" fill="#35383a" />
          <path d="M8 5l5-4 5 3 5-3 6 1 6 4-6 4-6-2-5 2-6-1z" fill="#eceff1" />
          <path d="M14 3l4 3M25 3l-3 4" stroke="#b4534a" strokeWidth="1.500" />
          <path d="M14 14l3 20M26 13l-4 24M31 14l-3 16" stroke="#a2a6a8" strokeOpacity="0.500" strokeWidth="1.500" />
        </svg>
      </Slot>
    </nav>
  );
}

export default function App() {
  return (
    <main className="relative h-[1600px] w-[2560px] overflow-hidden bg-[linear-gradient(180deg,#0a1a30_3%,#12284a_14%,#2f4a6c_36%,#3a4b68_42%,#252d48_45%,#2b3552_54%,#3d4964_62%,#3a4764_76%,#101c34_79%,#0c172c_100%)]">
      <div className="absolute right-0 bottom-0 h-[160px] w-[1000px] bg-[#081122]" />
      <EditorWindow />
      <TerminalWindow />
      <PdfWindow />
      <ConsoleWindow />
      <Phone />
      <Finder />
      <InputDialog />
      <Dock />
      <MenuBar />
    </main>
  );
}
